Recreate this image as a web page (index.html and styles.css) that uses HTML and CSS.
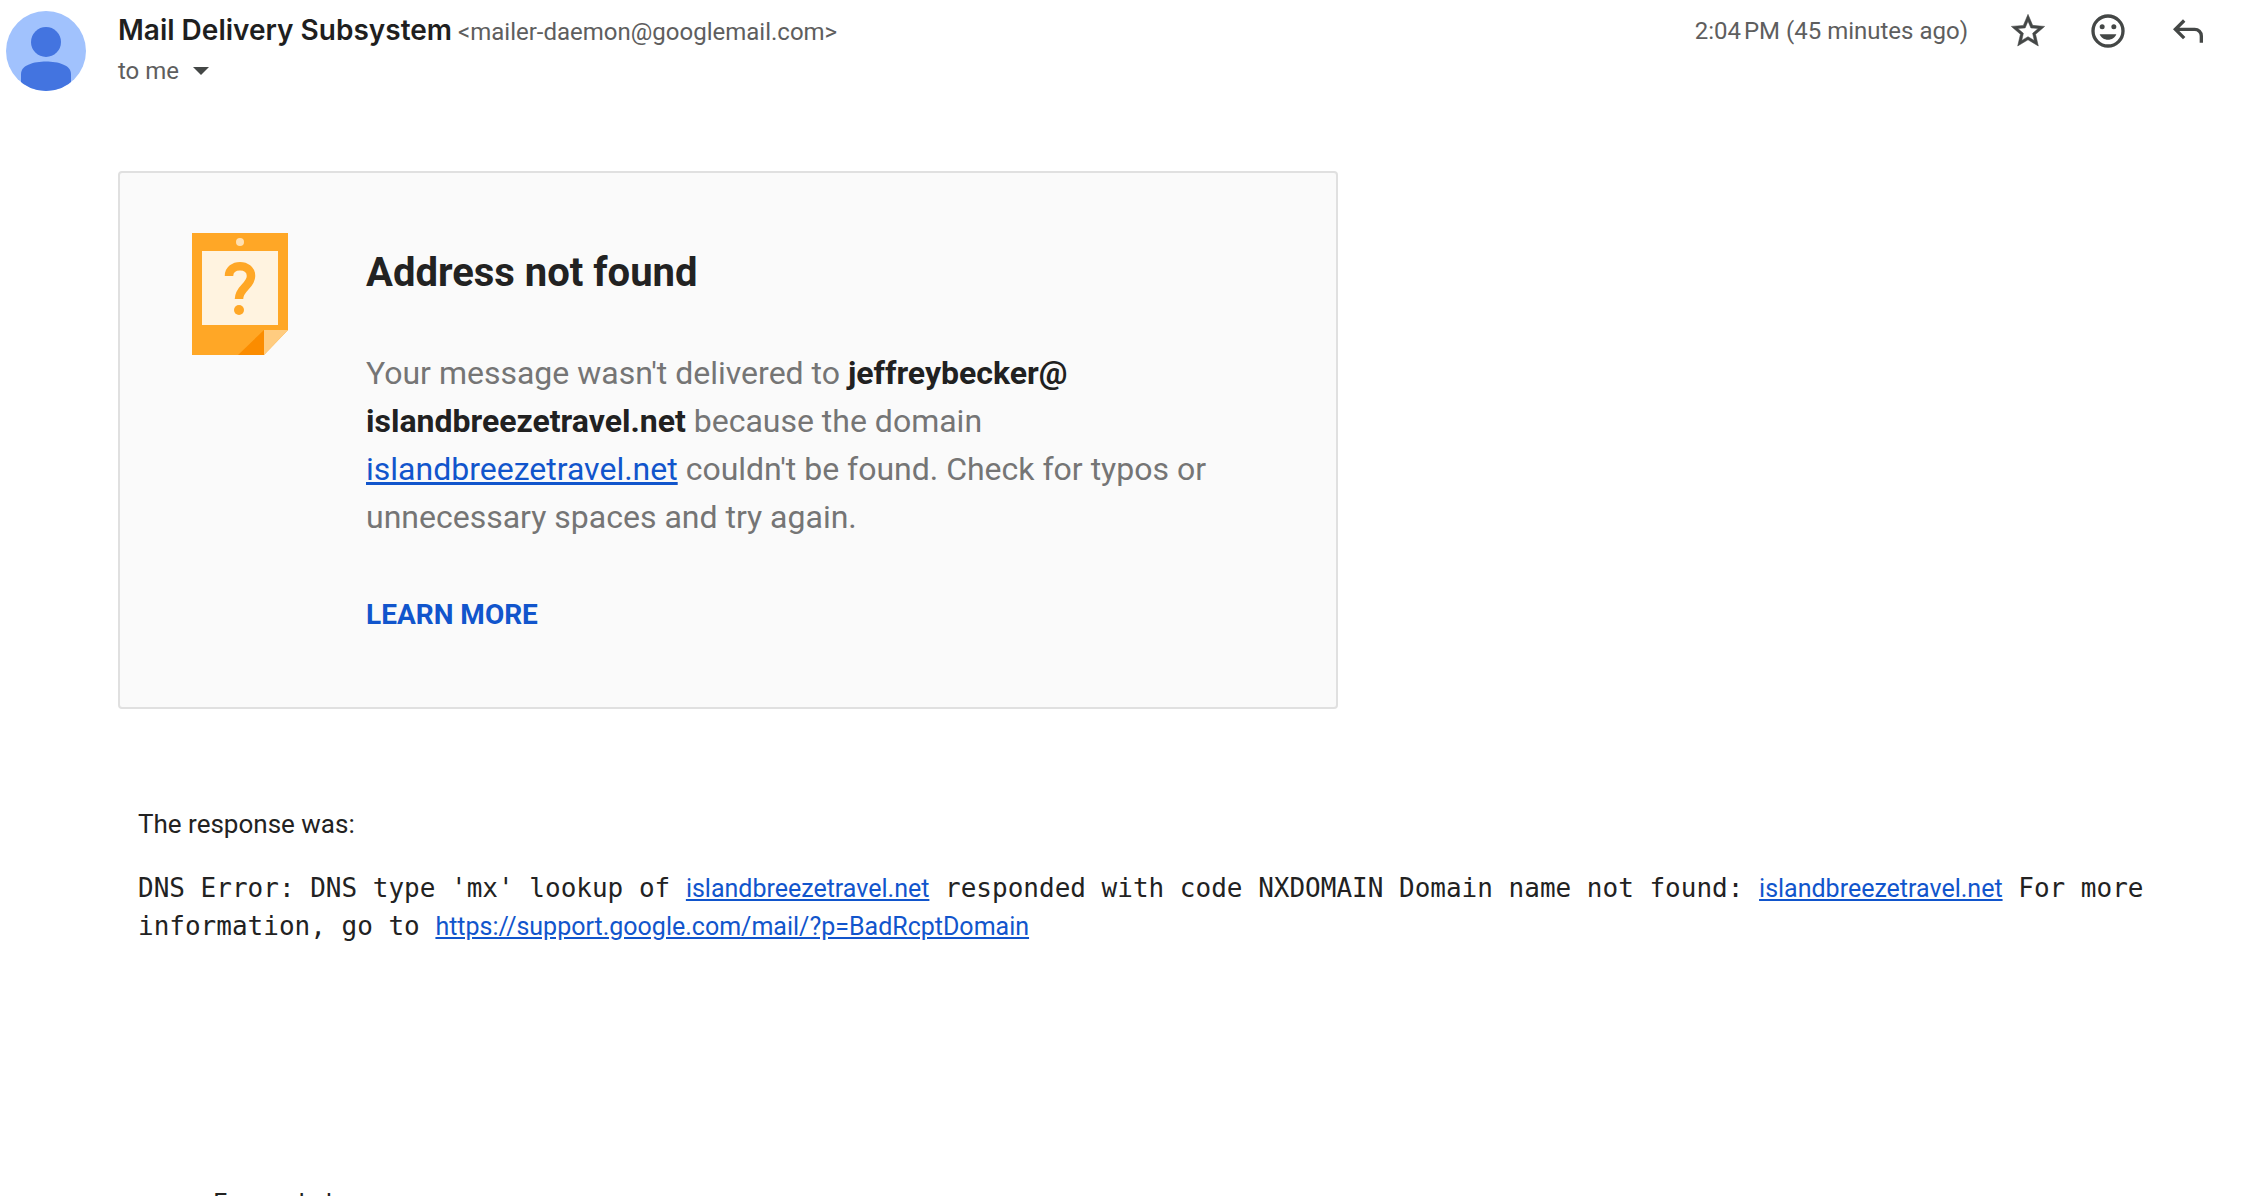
FILE: index.html
```html
<!DOCTYPE html>
<html lang="en">
<head>
<meta charset="utf-8">
<title>Mail Delivery Subsystem</title>
<link rel="stylesheet" href="styles.css">
</head>
<body>
<article class="message">
  <svg class="avatar" viewBox="0 0 80 80" aria-hidden="true">
    <clipPath id="avatar-clip"><circle cx="40" cy="40" r="40"/></clipPath>
    <g clip-path="url(#avatar-clip)">
      <rect width="80" height="80" fill="#a1c2fd"/>
      <circle cx="40" cy="31" r="15" fill="#4374e0"/>
      <path d="M15 80V63C15 54 28 50.500 40 50.500S65 54 65 63V80Z" fill="#4374e0"/>
    </g>
  </svg>
  <div class="content">
    <header class="head">
      <div class="sender">
        <div class="from"><h2 class="name">Mail Delivery Subsystem</h2> <span class="email">&lt;mailer-daemon@googlemail.com&gt;</span></div>
        <button class="recipient" type="button">to me
          <svg class="caret" viewBox="0 0 16 8" aria-hidden="true"><path d="M0 0h16L8 8z" fill="#444746"/></svg>
        </button>
      </div>
      <time class="time">2:04&#8239;PM (45 minutes ago)</time>
      <div class="actions">
        <button class="action" type="button" aria-label="Star">
          <svg viewBox="0 0 24 24"><path d="M22 9.240l-7.190-.62L12 2 9.190 8.630 2 9.240l5.460 4.730L5.820 21 12 17.270 18.180 21l-1.630-7.030L22 9.240zM12 15.400l-3.760 2.270 1-4.280-3.320-2.880 4.380-.38L12 6.100l1.710 4.040 4.380.38-3.320 2.880 1 4.280L12 15.400z" stroke="#444746" stroke-width=".3"/></svg>
        </button>
        <button class="action" type="button" aria-label="Add reaction">
          <svg viewBox="0 0 24 24"><path fill-rule="evenodd" d="M12 2a10 10 0 1 0 0 20 10 10 0 0 0 0-20zm0 18a8 8 0 1 1 0-16 8 8 0 0 1 0 16z"/><circle cx="8.500" cy="9.500" r="1.500"/><circle cx="15.500" cy="9.500" r="1.500"/><path d="M7 14h10c-.8 2-2.700 3.300-5 3.300S7.800 16 7 14z"/></svg>
        </button>
        <button class="action" type="button" aria-label="Reply">
          <svg viewBox="0 -960 960 960"><path d="M760-200v-160q0-50-35-85t-85-35H273l144 144-57 56-240-240 240-240 57 56-144 144h367q83 0 141.500 58.500T840-360v160h-80Z"/></svg>
        </button>
      </div>
    </header>

    <section class="notice">
      <svg class="notice-icon" viewBox="0 0 96 122" aria-hidden="true">
        <path d="M0 0h96v97l-24 25H0z" fill="#ffa726"/>
        <circle cx="48" cy="9" r="4" fill="#ffe0b2"/>
        <path d="M10 18h76v74H10z" fill="#fff3e0"/>
        <path d="M72 97v25H46z" fill="#fb8c00"/>
        <path d="M72 97h24L72 122z" fill="#ffcc80"/>
        <path d="M37 43C37 30 59 30 59 43C59 53 47 55 47 66" fill="none" stroke="#ffa726" stroke-width="8.500"/>
        <circle cx="47" cy="77" r="5" fill="#ffa726"/>
      </svg>
      <div class="notice-body">
        <h1 class="notice-title">Address not found</h1>
        <p class="notice-text">Your message wasn't delivered to <b>jeffreybecker@<wbr>islandbreezetravel.net</b> because the domain <a href="#">islandbreezetravel.net</a> couldn't be found. Check for typos or unnecessary spaces and try again.</p>
        <a class="learn" href="#">LEARN MORE</a>
      </div>
    </section>

    <section class="response">
      <p class="response-label">The response was:</p>
      <p class="response-text">DNS Error: DNS type 'mx' lookup of <a href="#">islandbreezetravel.net</a> responded with code NXDOMAIN Domain name not found: <a href="#">islandbreezetravel.net</a> For more information, go to <a href="#">https://support.google.com/mail/?p=BadRcptDomain</a></p>
    </section>

    <p class="forwarded">---------- Forwarded message ----------</p>
  </div>
</article>
</body>
</html>
```
FILE: styles.css
```css
* {
  box-sizing: border-box;
}

body {
  margin: 0;
  background: #fff;
  color: #222;
  font-family: Roboto, "Liberation Sans", sans-serif;
  font-size: 26px;
  line-height: 38px;
}

h1,
h2,
p {
  margin: 0;
}

a {
  color: #15c;
}

button {
  padding: 0;
  border: 0;
  background: none;
  font: inherit;
  color: inherit;
}

.message {
  display: flex;
  align-items: flex-start;
  gap: 32px;
  height: 100vh;
  padding: 11px 44px 0 6px;
  overflow: hidden;
}

.avatar {
  flex: none;
  width: 80px;
  height: 80px;
}

.content {
  flex: 1;
  min-width: 0;
}

.head {
  display: flex;
  align-items: flex-start;
  font-size: 24px;
  line-height: 40px;
  color: #5e5e5e;
}

.sender {
  flex: 1;
  line-height: 38px;
}

.name {
  display: inline;
  font-family: Inter, sans-serif;
  font-size: 28px;
  font-weight: 600;
  color: #1f1f1f;
}

.recipient {
  display: flex;
  align-items: center;
  gap: 14px;
  line-height: 40px;
}

.caret {
  width: 16px;
  height: 8px;
}

.actions {
  display: flex;
  gap: 40px;
  margin-left: 40px;
}

.action {
  display: flex;
  width: 40px;
  height: 40px;
  fill: #444746;
}

.notice {
  display: flex;
  gap: 78px;
  max-width: 1220px;
  margin-top: 80px;
  padding: 60px 72px 68px;
  border: 2px solid #e0e0e0;
  border-radius: 4px;
  background: #fafafa;
}

.notice-icon {
  flex: none;
  width: 96px;
  height: 122px;
}

.notice-body {
  flex: 1;
  padding-top: 16px;
}

.notice-title {
  font-size: 40px;
  line-height: 48px;
}

.notice-text {
  max-width: 860px;
  margin: 52px 0 50px;
  font-size: 32px;
  line-height: 48px;
  color: #757575;
}

.notice-text b {
  color: #212121;
}

.learn {
  font-size: 28px;
  font-weight: 700;
  line-height: 48px;
  text-decoration: none;
}

.response {
  margin-top: 96px;
  padding: 0 20px;
}

.response-text {
  margin-top: 26px;
  font-family: "DejaVu Sans Mono", monospace;
}

.response-text a {
  font-family: Roboto, sans-serif;
  font-size: 25px;
  line-height: 30px;
}

.forwarded {
  margin-top: 240px;
  padding-left: 20px;
  font-size: 25px;
}
```
